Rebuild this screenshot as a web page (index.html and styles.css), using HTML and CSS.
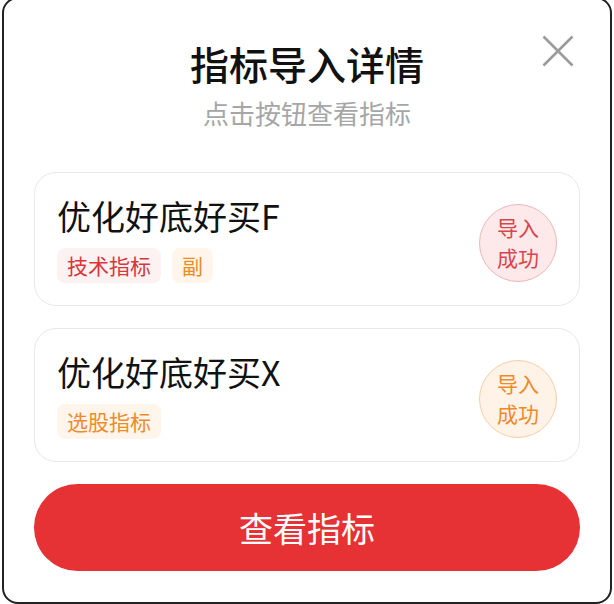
FILE: index.html
```html
<!DOCTYPE html>
<html lang="zh-CN">
<head>
  <meta charset="UTF-8">
  <meta name="viewport" content="width=device-width, initial-scale=1.0">
  <title>指标导入详情</title>
  <link rel="stylesheet" href="styles.css">
</head>
<body>
  <div class="dialog">
    <button class="close" aria-label="关闭">
      <svg width="32" height="32" viewBox="0 0 32 32">
        <path d="M1.5 1.5 L30.5 30.5 M30.5 1.5 L1.5 30.5" stroke="#9b9b9b" stroke-width="2.6" fill="none"/>
      </svg>
    </button>
    <h1 class="title">指标导入详情</h1>
    <p class="subtitle">点击按钮查看指标</p>

    <div class="list">
      <div class="card">
        <div class="info">
          <div class="name">优化好底好买F</div>
          <div class="tags">
            <span class="tag tag-red">技术指标</span>
            <span class="tag tag-orange">副</span>
          </div>
        </div>
        <div class="badge badge-red">导入<br>成功</div>
      </div>

      <div class="card">
        <div class="info">
          <div class="name">优化好底好买X</div>
          <div class="tags">
            <span class="tag tag-orange">选股指标</span>
          </div>
        </div>
        <div class="badge badge-orange">导入<br>成功</div>
      </div>
    </div>

    <button class="primary">查看指标</button>
  </div>
</body>
</html>
```

FILE: styles.css
```css
body {
  margin: 0;
  background: #fff;
  font-family: "Noto Sans CJK SC", "Noto Sans", sans-serif;
}
.dialog {
  position: relative;
  box-sizing: border-box;
  width: 610px;
  margin: -3px 0 0 2px;
  padding: 41px 30px 31px;
  background: #fff;
  border: 2px solid #222;
  border-radius: 16px;
}
.close {
  position: absolute;
  top: 36px;
  right: 36px;
  width: 32px;
  height: 32px;
  padding: 0;
  border: none;
  background: none;
}
.close svg {
  display: block;
}
.title {
  margin: 0;
  text-align: center;
  font-size: 39px;
  line-height: 47px;
  font-weight: 500;
  color: #111;
}
.subtitle {
  margin: 9px 0 0;
  text-align: center;
  font-size: 26px;
  line-height: 34px;
  color: #a6a6a6;
}
.list {
  margin-top: 42px;
  display: flex;
  flex-direction: column;
  gap: 22px;
}
.card {
  display: flex;
  align-items: center;
  padding: 22px;
  border: 1px solid #e8e8e8;
  border-radius: 22px;
}
.info {
  flex: 1;
}
.name {
  font-size: 34px;
  line-height: 42px;
  color: #111;
}
.tags {
  display: flex;
  gap: 11px;
  margin-top: 11px;
}
.tag {
  padding: 0 10px;
  height: 35px;
  line-height: 35px;
  font-size: 21px;
  border-radius: 8px;
}
.tag-red {
  color: #d8363b;
  background: #fdf2f2;
}
.tag-orange {
  color: #ef8a2a;
  background: #fff5eb;
}
.badge {
  box-sizing: border-box;
  width: 78px;
  height: 78px;
  margin-top: 8px;
  padding-bottom: 3px;
  border-radius: 50%;
  display: flex;
  align-items: center;
  justify-content: center;
  text-align: center;
  font-size: 21px;
  line-height: 30px;
}
.badge-red {
  color: #d9454a;
  background: #fde9ea;
  border: 1px solid #efb5b8;
}
.badge-orange {
  color: #ee8a2c;
  background: #fff2e6;
  border: 1px solid #f6cfa8;
}
.primary {
  display: block;
  width: 100%;
  height: 87px;
  margin-top: 22px;
  border: none;
  border-radius: 44px;
  background: #e63234;
  color: #fff;
  font-family: inherit;
  font-size: 34px;
}
```
